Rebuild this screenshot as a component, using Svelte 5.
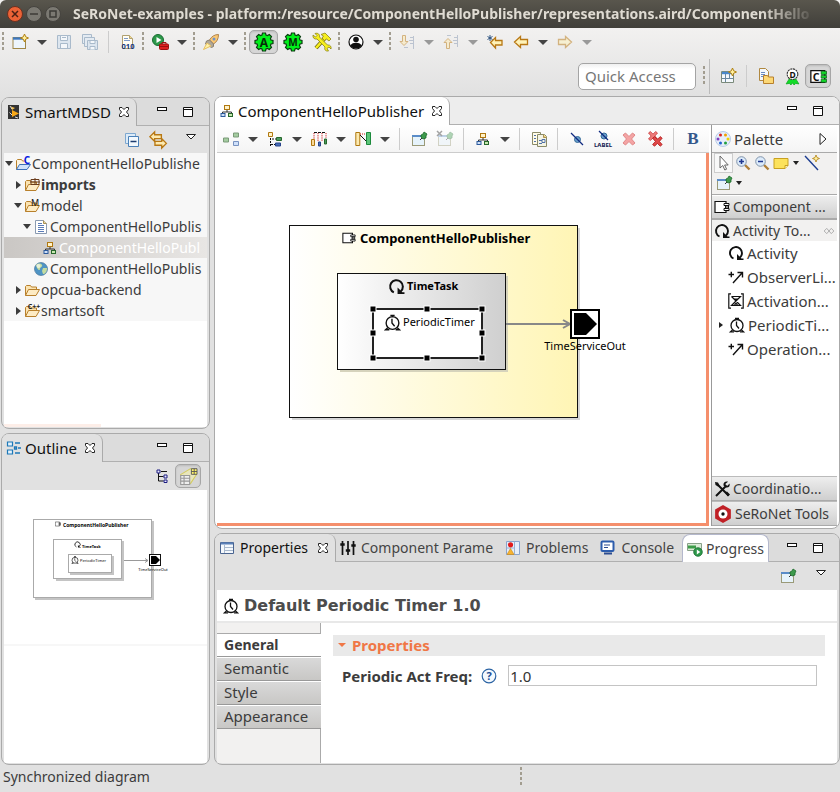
<script>
  const sheet = '<path d="M3.5 1.5h7l3 3v10h-10z" fill="#fffdf4" stroke="#b0a070"/><path d="M10.500 1.500v3h3" fill="#f0d890" stroke="#b0a070"/>';
  const folder = '<path d="M1.500 13.500v-9l1-1h4l1 1.500h5v2" fill="#fbe3b0" stroke="#b8802c"/><path d="M1.500 13.500l3-6h11l-3.500 6z" fill="#fdebc4" stroke="#b8802c"/>';
  const gear = '<path d="M8.500 1h3l.5 2 1.500.6L15.300 2.500l2.200 2.200-1.100 1.800.6 1.500 2 .5v3l-2 .5-.6 1.500 1.100 1.800-2.200 2.200-1.800-1.100-1.500.6-.5 2h-3l-.5-2-1.500-.6-1.800 1.100-2.200-2.200 1.100-1.800L3 12l-2-.5v-3L3 8l.6-1.500L2.500 4.700l2.200-2.200 1.800 1.100L8 3z" fill="#00f01a" stroke="#0a3c10" stroke-width="1.200"/>';
  const tree3 = '<rect x="5.500" y="2.500" width="5" height="4" fill="#fff2c8" stroke="#b07810"/><path d="M8 7v2M3.500 11V9h9v2" fill="none" stroke="#333"/><rect x="2" y="10.500" width="4" height="3" fill="#cfe0f8" stroke="#2c5a9c"/><rect x="9.500" y="10.500" width="4" height="3" fill="#c8e8b0" stroke="#28682c"/>';
  const pin = '<path d="M9 9l3-3" stroke="#333"/><path d="M10 4l2-1 1-2 3 2-1 2 0 2-3 1-2-2z" fill="#3d9a4c" stroke="#1c6a2a" stroke-width=".8"/>';
  const pinwin = '<rect x="1.500" y="4.500" width="12" height="10" fill="#e6f3fb" stroke="#9a9a78"/><path d="M1 5h12" stroke="#5a8cc8" stroke-width="1.800"/>' + pin;
  const arrowL = '<path d="M1.500 8l6-5.500v3h7v5h-7v3z" fill="#fff3b8" stroke="#b87814" stroke-width="1.300"/>';
  const cycle = '<path d="M5.500 13.500A6 6 0 1 1 12 12.500" fill="none" stroke="#111" stroke-width="1.900"/><path d="M9 9v6h6.500v-1.500h-2z" fill="#111"/>';
  const clock = '<circle cx="8" cy="8.500" r="6" fill="#fff" stroke="#111" stroke-width="1.300"/><path d="M7.500 4.500v4l2.500 3M6 1.300h4M8 1v2M3.500 13l-2 1.800h3.500M12.500 13l2 1.800H11" fill="none" stroke="#111" stroke-width="1.300"/>';
  const comp = '<path d="M1 2.500h11v11H1z" fill="#fff" stroke="#111" stroke-width="1.200"/><path d="M10 4.500h5v2h-5zM10 9.500h5v2h-5zM11.500 7h3v2h-3z" fill="#fff" stroke="#111"/>';
  const obs = '<path d="M5 14L14 4M9.500 3.500h5v5" fill="none" stroke="#111" stroke-width="1.400"/><path d="M.5 5.500h5.500M3.300 2.800v5.500" stroke="#111" stroke-width="1.400"/>';
  const zoomGlass = '<path d="M10 10l4.500 4.500" stroke="#b08038" stroke-width="2.400"/><circle cx="6.500" cy="6.500" r="4.800" fill="#dcebfa" stroke="#8294aa"/>';
  const redX = '<path d="M2 4l2.500-2L8 5.500 11.500 2 14 4 10.500 8l3.500 4-2.500 2L8 10.500 4.500 14 2 12 5.500 8z" ';
  const tilted = '<circle cx="8.500" cy="8.500" r="3" fill="#6aa0cc" stroke="#356a98"/><path d="M2 2l12 12" stroke="#102a80" stroke-width="1.200"/>';

  const icons = {
    new: '<rect x="1" y="3.500" width="12.500" height="11" fill="#edf5fc" stroke="#a08848"/><path d="M1 4.500h12" stroke="#3d78c0" stroke-width="2.400"/><path d="M12.500 0l1.200 2.800L16.500 4l-2.800 1.200L12.500 8l-1.200-2.800L8.500 4l2.800-1.200z" fill="#fff0a0" stroke="#b08010"/>',
    save: '<path d="M1.500 1.500h13v13h-13z" fill="#dde6ef" stroke="#a9bacb"/><path d="M4.500 1.500h7v5h-7zM4.500 14v-4.500h7V14M6 3.500h4" fill="#f4f7fa" stroke="#a9bacb"/>',
    saveall: '<path d="M.5.500h9v9h-9z" fill="#e4ebf2" stroke="#a9bacb"/><path d="M2.500 3.500h10v9h-10z" fill="#e4ebf2" stroke="#a9bacb"/><path d="M5.500 6.500h10v9h-10z" fill="#dde6ef" stroke="#a9bacb"/><path d="M8 6.500h5v3H8zM8 15.500v-3h5v3" fill="#f4f7fa" stroke="#a9bacb"/>',
    binary: sheet + '<path d="M5 4.500h4M5 6.500h6" stroke="#7c98c8"/><text x="9" y="14.500" font-size="7.500" font-weight="700" text-anchor="middle" fill="#16377c">010</text>',
    run: '<circle cx="6" cy="6" r="5.500" fill="#2d984a" stroke="#1a6e32"/><path d="M4.500 3l5 3-5 3z" fill="#fff"/><rect x="7.500" y="10" width="9" height="5.500" rx="1" fill="#dc2020" stroke="#9c1010"/><path d="M10 10V8.500h4V10M7.500 12.500h9" fill="none" stroke="#9c1010"/>',
    rocket: '<path d="M15.500.5c-4 0-7 2-9 5.500l4 4c3.500-2 5-5.500 5-9.500z" fill="#fbc873" stroke="#b08450"/><circle cx="11" cy="5" r="1.500" fill="#6f93c8"/><path d="M6.500 6l-3 1-1 3 6 3.500 2-1V10z" fill="#b0a898" stroke="#8a8070"/><path d="M4 9l-3.500 6.500L8 12z" fill="#fff2a8" stroke="#e8c060"/>',
    gearA: gear + '<text x="10" y="14.500" font-size="12" font-weight="700" text-anchor="middle" fill="#052c08">A</text>',
    gearM: gear + '<text x="10" y="13.500" font-size="10" font-weight="700" text-anchor="middle" fill="#052c08">M</text>',
    tools: '<path d="M4 16L13 6" stroke="#6a6208" stroke-width="4"/><path d="M4 16L13 6" stroke="#f6ee1e" stroke-width="2.600"/><path d="M9 2.500l4-1.500 6 6-2 2-2.500-2-2 1.500-2.500-2.500 1.500-2z" fill="#f6ee1e" stroke="#8c8418" stroke-width=".8"/><path d="M1 3l2.500 2L5 3.500 3 1.500c3-1 5 1 4.500 3.500l8 8c3-.5 4 2 3.500 4l-2-2-2 1.500 1.500 2.500c-3 .5-4.500-1.500-3.500-4l-8-8C2.500 7.500.5 6 1 3z" fill="#f6ee1e" stroke="#8c8418" stroke-width=".8"/>',
    user: '<circle cx="8" cy="8" r="7" fill="#fff" stroke="#111" stroke-width="1.200"/><circle cx="8" cy="5.500" r="2.800" fill="#111"/><path d="M2.500 12c.5-2.500 2.500-3.300 5.500-3.300s5 .8 5.500 3.300c-1.500 1.800-3.500 2.500-5.500 2.500S4 13.800 2.500 12z" fill="#111"/>',
    down: '<g opacity=".5"><path d="M3.500 1.500h3v6h2.500L5 11.500 1 7.500h2.500z" fill="#fdeab0" stroke="#b87814"/><path d="M11 3.500h3M10 6.500h4M11 9.500h3M14.500 2v13M5 13.500h4" stroke="#8a9ab4"/></g>',
    up: '<g opacity=".5"><path d="M3.500 14.500h3v-6h2.500L5 4.500 1 8.500h2.500z" fill="#fdeab0" stroke="#b87814"/><path d="M11 3.500h3M10 6.500h4M11 9.500h3M14.500 1v12M4 1.500h4" stroke="#8a9ab4"/></g>',
    last: '<path d="M3.500 8.500l5-5v3h6.500v4.500H8.500v3z" fill="#fff3b8" stroke="#b87814" stroke-width="1.300"/><path d="M3 1v6M.5 2.500l5 3M5.500 2.500l-5 3" stroke="#2c5280"/>',
    back: arrowL,
    forward: '<g transform="translate(16 0) scale(-1 1)" opacity=".5">' + arrowL + '</g>',
    openpersp: '<path d="M1.500 3.500h12v11h-12z" fill="#f4f8fc" stroke="#7a8a7a"/><path d="M2 5h11" stroke="#4a88cc" stroke-width="2.400"/><path d="M5.500 6v8M2 10.500h11M9.500 6v4" stroke="#6a88a0"/><path d="M12.500 0l1.200 2.800L16.500 4l-2.800 1.200L12.500 8l-1.200-2.800L8.500 4l2.800-1.200z" fill="#fff0a0" stroke="#b08010"/>',
    resource: '<path d="M1.500.5h6l3 3v9h-9z" fill="#f4f8fc" stroke="#b08840"/><path d="M3 4.500h4M3 6.500h4M3 8.500h3" stroke="#6a8ac0"/><path d="M5.500 15.500v-8h4l1 1.500h5v6.500z" fill="#fcd876" stroke="#b8802c"/>',
    medal: '<path d="M2 15l3-5h6l3 5-3-.5-1.500 1.500-1.500-2-1.500 2L5 14.500z" fill="#12dc28" stroke="#10a420" stroke-width=".7"/><circle cx="8" cy="5.800" r="5" fill="#fff" stroke="#333" stroke-dasharray="2 .6"/><text x="8" y="9" font-size="8" font-weight="700" text-anchor="middle" fill="#111">D</text>',
    cpersp: '<path d="M.8 2.500h13v11H.8z" fill="#fff" stroke="#111" stroke-width="1.200"/><path d="M10.500 3h5v3h-5zM10.500 7h5v2.500h-5zM10.500 10.500h5v3h-5z" fill="#12d828" stroke="#0a5c14" stroke-width=".7"/><text x="5.800" y="11.800" font-size="10" font-weight="700" text-anchor="middle" fill="#111">C</text>',
    mdsd: '<path d="M2 1h11v14H2z" fill="#333"/><path d="M6 6l7 3.500L6 13z" fill="#f8a818"/><path d="M5 2.500l4 1.500-3 2z" fill="#f8c048"/><path d="M4 2l2 3M3.500 8.500L6 11M9 13l3 1" stroke="#ddd"/>',
    collapse: '<path d="M1.500 1.500h10v10h-10z" fill="#dcebf8" stroke="#7ea8d0"/><path d="M4.500 4.500h10v10h-10z" fill="#f2f8fd" stroke="#4a80b8"/><path d="M6.500 9.500h6" stroke="#1c3c70" stroke-width="1.400"/>',
    link: '<path d="M.8 5L5 .8v2.500h6v3.500H5v2.400z" fill="#fdeab0" stroke="#b87814" stroke-width="1.200"/><path d="M15.500 11l-4.200 4.200v-2.500h-6V9.200h6V6.800z" fill="#fdeab0" stroke="#b87814" stroke-width="1.200"/>',
    project: '<path d="M1.500 13.500v-9l1-1h4l1 1.500h3v2" fill="#fdf4e0" stroke="#b8802c"/><path d="M1.500 13.500l3-5h11l-3.500 5z" fill="#cfe2fa" stroke="#3c70b8"/><text x="12" y="8" font-size="10" font-weight="700" text-anchor="middle" fill="#0818e0">C</text>',
    imports: folder + '<path d="M7 2.500h8v5H7zM11 1v7M6 5h10" fill="none" stroke="#6a3c1c"/>',
    model: folder + '<text x="11" y="8" font-size="9" text-anchor="middle" fill="#111">M</text>',
    folder,
    cpp: folder + '<text x="10" y="6" font-size="7" font-weight="700" text-anchor="middle" fill="#222">C++</text>',
    doc: '<path d="M2.500 1.500h8l3 3v10h-11z" fill="#fff" stroke="#8a9ab0"/><path d="M10.500 1.500v3h3" fill="#f0d890" stroke="#a89058"/><path d="M5 4.500h4M5 6.500h6M5 8.500h6M5 10.500h6M5 12.500h6" stroke="#5a7cb8"/>',
    diagram: tree3,
    globe: '<circle cx="8" cy="8" r="6.500" fill="#4f94c4" stroke="#3a6a90" stroke-width=".6"/><path d="M3 4c2-2 5-2 6 0s-2 2-2 4-2 1-3-1zM10 7l4 0c0 4-2 6-4 6l-1-3z" fill="#c4dca0"/><circle cx="5.500" cy="5" r="2" fill="#fff" opacity=".6"/>',
    outline: '<path d="M1.500 2h5v4h-5zM1.500 10h5v4h-5z" fill="#e4f2fc" stroke="#1c78b8" stroke-width="1.200"/><path d="M9 3h5M12 8h3M9 13h5M8.500 7h2v2h-2z" fill="none" stroke="#1c78b8" stroke-width="1.300"/>',
    hier: '<path d="M4.500 5v8h5M4.500 8.500h5M7 3.500h6" fill="none" stroke="#111"/><path d="M3 2h3v3H3zM10 7h3v3h-3zM10 12h3v2.500h-3z" fill="#e8e8ff" stroke="#1c1c80"/>',
    overview: '<path d="M1 7l10-6 5 5-6 9z" fill="#e8e6bc"/><path d="M1 7L11 1M10 15l6-9" stroke="#d4cc60"/><path d="M1.500 7.500h8v8h-8zM1.500 10h8M1.500 12.500h8M4.500 7.500v8" fill="#eee" stroke="#999"/><path d="M11 1.500h5v5h-5zM11 4h5M13.500 1.500v5" fill="#fff46a" stroke="#555" stroke-width=".8"/>',
    arrange: '<path d="M.5 7h5v4h-5z" fill="#a4cca0" stroke="#7a9a78"/><path d="M10.500 2h5v4h-5z" fill="#a4cca0" stroke="#7a9a78"/><path d="M10.500 10.500h5v4h-5z" fill="#cfe0fa" stroke="#7892c0"/>',
    align: '<path d="M1.500 1.500h4v4h-4z" fill="#fff2c8" stroke="#b07810"/><path d="M9.500 6.500h5v3h-5z" fill="#4a9a60" stroke="#28682c"/><path d="M8.500 12h5v3h-5z" fill="#4a70b8" stroke="#28448c"/><path d="M3.500 7v8M5 8h4M4 13.500h4" stroke="#111" stroke-dasharray="2 1"/>',
    distribute: '<path d="M.5 8.500h3v6h-3z" fill="#f8d898" stroke="#b07810"/><path d="M7.500 11h2v4h-2z" fill="#4a70b8" stroke="#28448c"/><path d="M13.500 8h2v5h-2z" fill="#4a9a60" stroke="#28682c"/><path d="M3 2v6M7 2v8M11 2v8M15 2v5" stroke="#d01818" stroke-dasharray="1.200 1"/><path d="M3 1.500h12" stroke="#111" stroke-width="1.200" stroke-dasharray="3 1"/>',
    size: '<path d="M.8 1.500h4v13h-4z" fill="#fdeab0" stroke="#b07810"/><path d="M11.500 1.500h4v12h-4z" fill="#5cc478" stroke="#1c8a3c"/><path d="M5 3h6" stroke="#d01818" stroke-dasharray="1 1"/><path d="M5 4l6 6" stroke="#111"/>',
    pinwin,
    unpin: '<g opacity=".4">' + pinwin + '<path d="M0 0l5 5M5 0L0 5" stroke="#222" stroke-width="1.500"/></g>',
    copyfmt: '<path d="M1.500 1.500h8v12h-8z" fill="#fffbe8" stroke="#8a8a68"/><path d="M6.500 3.500h7l2 2v10h-9z" fill="#f4f4e4" stroke="#8a8a68"/><path d="M12.500 3.500v3h3" fill="#f0d060" stroke="#a89058"/><path d="M3 4.500h2M3 7.500h2M3 10.500h2M8 9.500h3M8 12.500h3M11 8.500h3v3h-3z" fill="none" stroke="#5070a8"/>',
    hide: tilted,
    hidelabel: '<circle cx="9" cy="5" r="3" fill="#6aa0cc" stroke="#356a98"/><path d="M4 0l9 9" stroke="#102a80" stroke-width="1.200"/><text x="8" y="16" font-size="6" font-weight="700" text-anchor="middle" fill="#101850">LABEL</text>',
    del: redX + 'fill="#f4a4a4" stroke="#e08888"/>',
    delall: redX + 'fill="#ee7c7c" stroke="#c43030" transform="translate(0 -1) scale(.75)"/>' + redX + 'fill="#e04848" stroke="#b01818" transform="translate(4 4) scale(.8)"/>',
    palette: '<circle cx="8" cy="8" r="7.500" fill="#e6eefa" stroke="#b8cce8"/><circle cx="5.500" cy="4" r="1.500" fill="#d82020"/><circle cx="10.500" cy="4" r="1.500" fill="#f0a000"/><circle cx="13" cy="8" r="1.500" fill="#f0d000"/><circle cx="3" cy="8" r="1.500" fill="#8040c0"/><circle cx="5.500" cy="12" r="1.500" fill="#2060d0"/><circle cx="10.500" cy="12" r="1.500" fill="#20a040"/>',
    select: '<path d="M4 1v12l2.800-2.500 2 4.500 1.800-.8-2-4.200h3.600z" fill="#fff" stroke="#666"/>',
    zoomin: zoomGlass + '<path d="M4 6.500h5M6.500 4v5" stroke="#203890" stroke-width="1.600"/>',
    zoomout: zoomGlass + '<path d="M4 6.500h5" stroke="#203890" stroke-width="1.600"/>',
    note: '<path d="M1 3.500h14v7l-3 3H1z" fill="#fce25c" stroke="#c8a020"/><path d="M12 13.500v-3h3" fill="#fff6b8" stroke="#c8a020"/>',
    wire: '<path d="M1 1l13 14" stroke="#1c3c90" stroke-width="1.400"/><path d="M12 0l1 2.500L15.500 3.500 13 4.500 12 7l-1-2.500L8.500 3.500 11 2.500z" fill="#fff0a0" stroke="#b08010" stroke-width=".8"/>',
    comp, cycle, obs, clock,
    activation: '<path d="M3 .8H.8v14.400H3M13 .8h2.200v14.400H13M3.500 3.500h9L3.500 12.500h9L3.500 3.500" fill="none" stroke="#111" stroke-width="1.200"/><path d="M6 5.500h4L8 8zM5.500 11.800h5L8 9.500z" fill="#111"/>',
    coord: '<path d="M2 15L12.500 4.500M3.500 3.500L14.500 14.500" stroke="#111" stroke-width="2"/><path d="M1 1l3 .5 1.500 3-1.500 1L1.500 4zM14 .8l-2.500 2 .3 1.700 1.700.3 2-2.300c.8 2.500-.8 4.500-3.500 4L9.500 4.500c-.5-2.700 2-4.500 4.500-3.700zM11 11.500l2-1 3 3-2 2z" fill="#111"/>',
    seronet: '<path d="M8 0l7 4v8l-7 4-7-4V4z" fill="#c02026"/><circle cx="8" cy="8" r="4" fill="#fff"/><circle cx="8" cy="8" r="1.500" fill="#111"/>',
    props: '<path d="M1.500 2.500h13v11h-13z" fill="#f4f8fc" stroke="#4a6490"/><path d="M2 3.500h12" stroke="#5a80b8" stroke-width="2"/><path d="M5.500 5v8M6 7.500h8M6 10.500h8" stroke="#a8b8cc"/>',
    params: '<path d="M2.500 1v14M8 1v14M13.500 1v14" stroke="#111" stroke-width="1.700"/><path d="M.3 4.500h4.400M5.800 10.500h4.400M11.300 5.500h4.400" stroke="#111" stroke-width="2.400"/>',
    problems: '<path d="M1.500 1.500h13v13h-13z" fill="#e4eefa" stroke="#8aa4cc"/><path d="M1.500 8h8M9.500 1.500v13" stroke="#9ab0d0"/><circle cx="5.500" cy="4.800" r="2.600" fill="#e01c1c"/><path d="M5.500 8.500l3.500 6H2z" fill="#f8b430" stroke="#c88410" stroke-width=".6"/>',
    console: '<rect x="1.500" y="1.500" width="12" height="9.500" rx="1" fill="#fff" stroke="#2c5cac" stroke-width="2"/><path d="M4 5h6M4 7.500h4" stroke="#2c4c90"/><path d="M4 13.500h8" stroke="#2c4c90" stroke-width="2"/>',
    progress: '<path d="M.5 2.500h14v7H.5z" fill="#dcecd8" stroke="#88a088"/><path d="M1 4.500h8v3H1z" fill="#3c9c48"/><circle cx="11" cy="11" r="4.300" fill="#2d984a" stroke="#1a6e32" stroke-width=".8"/><path d="M9.800 8.500l3.500 2.500-3.500 2.500z" fill="#fff"/>',
    help: '<circle cx="8" cy="8" r="6.800" fill="#f4f9fe" stroke="#2c64a4" stroke-width="1.200"/><text x="8" y="12" font-size="11" font-weight="700" text-anchor="middle" fill="#1c4c94">?</text>',
    close: '<path d="M3.500 3.500h2.500l2 2 2-2h2.500v2l-2 2.500 2 2.500v2H10l-2-2-2 2H3.500v-2l2-2.500-2-2.500z" fill="#fff" stroke="#222"/>',
    min: '<rect x="3.500" y="3.500" width="9" height="3" fill="#fff" stroke="#111"/>',
    max: '<path d="M3.500 3.500h9v9h-9zM3.500 5.500h9" fill="#fff" stroke="#111" />',
    viewmenu: '<path d="M3.500 5.500h9L8 10z" fill="#fff" stroke="#222"/>',
    pin3: '<path d="M5 2.500v11L11 8z" fill="#fff" stroke="#222"/>',
    pinned: '<path d="M5 4.500L1.500 8 5 11.500M11 4.500L14.500 8 11 11.500M5 4.500l6 7M11 4.500l-6 7" fill="none" stroke="#999"/>'
  };

  const mainTools = ['|', 'new', 'v', 'save', 'saveall', '/', 'binary', '|', 'run', 'v', '|', 'rocket', 'v', '|', 'gearA', 'gearM', 'tools', '|', 'user', 'v', '|', 'down', 'x', 'up', 'x', 'last', 'back', 'v', 'forward', 'x'];
  const editorTools = ['arrange', 'v', 'align', 'v', 'distribute', 'v', 'size', 'v', '/', 'pinwin', 'unpin', '/', 'diagram', 'v', '/', 'copyfmt', '/', 'hide', 'hidelabel', 'del', 'delall', '/', 'B'];
  const large = ['gearA', 'gearM', 'tools'];

  const tree = [
    { level: 0, state: 'open', icon: 'project', text: 'ComponentHelloPublishe' },
    { level: 1, state: 'closed', icon: 'imports', text: 'imports', bold: true },
    { level: 1, state: 'open', icon: 'model', text: 'model' },
    { level: 2, state: 'open', icon: 'doc', text: 'ComponentHelloPublis' },
    { level: 3, state: '', icon: 'diagram', text: 'ComponentHelloPubl', selected: true },
    { level: 2, state: '', icon: 'globe', text: 'ComponentHelloPublis' },
    { level: 1, state: 'closed', icon: 'folder', text: 'opcua-backend' },
    { level: 1, state: 'closed', icon: 'cpp', text: 'smartsoft' }
  ];

  const paletteItems = [
    ['cycle', 'Activity'],
    ['obs', 'ObserverLi...'],
    ['activation', 'Activation...'],
    ['clock', 'PeriodicTi...'],
    ['obs', 'Operation...']
  ];
  const views = [
    ['params', 'Component Parame'],
    ['problems', 'Problems'],
    ['console', 'Console']
  ];
  const pages = ['General', 'Semantic', 'Style', 'Appearance'];
  const handles = [[156, 156], [210, 156], [265, 156], [156, 180], [265, 180], [156, 205], [210, 205], [265, 205]];
  let page = $state('General');
  let frequency = $state('1.0');
</script>

{#snippet icon(name, size = 16, box = 16)}
  <svg class="icon" width={size} height={size} viewBox="0 0 {box} {box}" aria-hidden="true">{@html icons[name]}</svg>
{/snippet}

{#snippet tools(list)}
  {#each list as t}
    {#if t === '|'}
      <span class="grip"></span>
    {:else if t === '/'}
      <span class="rule"></span>
    {:else if t === 'v' || t === 'x'}
      <button class="drop" disabled={t === 'x'} aria-label="More"><i></i></button>
    {:else if t === 'B'}
      <button class="tool bold-tool">B</button>
    {:else if large.includes(t)}
      <button class="tool wide" class:pressed={t === 'gearA'} aria-label={t}>{@render icon(t, 20, 20)}</button>
    {:else}
      <button class="tool" aria-label={t}>{@render icon(t)}</button>
    {/if}
  {/each}
{/snippet}

{#snippet windowButtons()}
  <span class="winbtns">
    <button aria-label="Minimize">{@render icon('min')}</button>
    <button aria-label="Maximize">{@render icon('max')}</button>
  </span>
{/snippet}

<div class="window">
  <header class="titlebar">
    <button class="wb close" aria-label="Close window"><svg width="8" height="8"><path d="M1 1l6 6M7 1l-6 6" stroke="#4c2014" stroke-width="1.500" /></svg></button>
    <button class="wb" aria-label="Minimize window"><svg width="8" height="8"><path d="M0 4h8" stroke="#3c3b37" stroke-width="1.500" /></svg></button>
    <button class="wb" aria-label="Maximize window"><svg width="8" height="8"><path d="M1 1h6v6h-6z" fill="none" stroke="#3c3b37" stroke-width="1.500" /></svg></button>
    <h1>SeRoNet-examples - platform:/resource/ComponentHelloPublisher/representations.aird/ComponentHello</h1>
  </header>

  <div class="toolbar">{@render tools(mainTools)}</div>
  <div class="perspectives">
    <input class="quick" type="text" placeholder="Quick Access" aria-label="Quick Access" />
    <span class="grip"></span>
    <div class="switcher">
      <button class="tool" aria-label="Open perspective">{@render icon('openpersp')}</button>
      <span class="rule"></span>
      <button class="tool" aria-label="Resource">{@render icon('resource')}</button>
      <button class="tool" aria-label="Deployment">{@render icon('medal', 17)}</button>
      <button class="tool pressed" aria-label="Component">{@render icon('cpersp', 17)}</button>
    </div>
  </div>

  <main>
    <div class="side">
      <section class="panel">
        <div class="tabs">
          <span class="tab active">{@render icon('mdsd')}<b>SmartMDSD</b><button aria-label="Close">{@render icon('close')}</button></span>
          {@render windowButtons()}
        </div>
        <div class="viewbar treebar">
          <button class="tool" aria-label="Collapse all">{@render icon('collapse')}</button>
          <button class="tool" aria-label="Link with editor">{@render icon('link', 18)}</button>
          <button class="menu" aria-label="View menu">{@render icon('viewmenu')}</button>
        </div>
        <div class="body">
          <ul class="tree">
            {#each tree as row}
              <li class="level{row.level}" class:selected={row.selected} class:bold={row.bold}>
                <span class="twist {row.state}"></span>
                {@render icon(row.icon)}
                <span>{row.text}</span>
              </li>
            {/each}
          </ul>
          <div class="progressline"></div>
        </div>
      </section>

      <section class="panel">
        <div class="tabs">
          <span class="tab active">{@render icon('outline')}<b>Outline</b><button aria-label="Close">{@render icon('close')}</button></span>
          {@render windowButtons()}
        </div>
        <div class="viewbar outlinebar">
          <button class="tool" aria-label="Tree">{@render icon('hier')}</button>
          <button class="tool pressed" aria-label="Overview">{@render icon('overview', 18)}</button>
        </div>
        <div class="body">
          <div class="thumb">
            <svg width="100%" height="154">
              <path d="M31 109h118V31" fill="none" stroke="#c4c4c4" stroke-width="2" />
              <rect x="29.500" y="29.500" width="118" height="78" fill="#fff" stroke="#aaa" />
              <path d="M52 90h67V51" fill="none" stroke="#c4c4c4" stroke-width="2" />
              <rect x="49.500" y="49.500" width="68" height="39" fill="#fff" stroke="#aaa" />
              <path d="M66 84h43V66" fill="none" stroke="#c4c4c4" stroke-width="2" />
              <rect x="64.500" y="64.500" width="43" height="18" fill="#fff" stroke="#aaa" />
              <path d="M120 70.500h24l-3-2m3 2l-3 2" fill="none" stroke="#999" />
              <rect x="145.500" y="64.500" width="11" height="11" fill="#fff" stroke="#111" />
              <path d="M147 66h5l4 4-4 4h-5z" />
              <g font-size="5" font-weight="700">
                <text x="59" y="37">ComponentHelloPublisher</text>
                <text x="78" y="58" font-size="4">TimeTask</text>
              </g>
              <text x="76" y="72" font-size="4">PeriodicTimer</text>
              <text x="149" y="81" font-size="4" text-anchor="middle">TimeServiceOut</text>
              <svg x="51" y="31" width="6" height="6" viewBox="0 0 16 16">{@html icons.comp}</svg>
              <svg x="70" y="51" width="7" height="7" viewBox="0 0 16 16">{@html icons.cycle}</svg>
              <svg x="67" y="66" width="8" height="8" viewBox="0 0 16 16">{@html icons.clock}</svg>
            </svg>
          </div>
        </div>
      </section>
    </div>

    <div class="centre">
      <section class="panel editor">
        <div class="tabs">
          <span class="tab active">{@render icon('diagram')}<b>ComponentHelloPublisher</b><button aria-label="Close">{@render icon('close')}</button></span>
          {@render windowButtons()}
        </div>
        <div class="body split">
          <div class="drawing">
            <div class="editorbar">{@render tools(editorTools)}</div>
            <svg class="canvas">
              <defs>
                <linearGradient id="cream"><stop offset="0" stop-color="#fff" /><stop offset="1" stop-color="#fff5b5" /></linearGradient>
                <linearGradient id="grey"><stop offset="0" stop-color="#fff" /><stop offset="1" stop-color="#cfcfcf" /></linearGradient>
              </defs>
              <rect x="75" y="75" width="288" height="192" fill="#d6d6d6" />
              <rect x="72.500" y="72.500" width="288" height="192" fill="url(#cream)" stroke="#111" />
              <rect x="123" y="123" width="168" height="96" fill="#d6d3bc" />
              <rect x="120.500" y="120.500" width="168" height="96" fill="url(#grey)" stroke="#111" />
              <rect x="156" y="156" width="109" height="49" fill="#fff" stroke="#222" stroke-width="2" />
              <path d="M289 171h63M346 167l7 4-7 4" fill="none" stroke="#888" stroke-width="2" />
              <rect x="354" y="157" width="28" height="28" fill="#fff" stroke="#000" stroke-width="2" />
              <path d="M357 160h12l11 11-11 11h-12z" />
              {#each handles as [x, y]}
                <rect x={x - 3} y={y - 3} width="6" height="6" fill="#000" stroke="#fff" />
              {/each}
              <svg x="124" y="78" width="16" height="14" viewBox="0 0 16 16">{@html icons.comp}</svg>
              <svg x="171" y="125" width="17" height="17" viewBox="0 0 16 16">{@html icons.cycle}</svg>
              <svg x="167" y="161" width="17" height="17" viewBox="0 0 16 16">{@html icons.clock}</svg>
              <text x="143" y="90" font-size="13" font-weight="700">ComponentHelloPublisher</text>
              <text x="190" y="137" font-size="11" font-weight="700">TimeTask</text>
              <text x="186" y="173" font-size="11">PeriodicTimer</text>
              <text x="368" y="197" font-size="11" text-anchor="middle">TimeServiceOut</text>
            </svg>
          </div>
          <aside class="palette">
            <div class="phead">{@render icon('palette')}<span>Palette</span><button aria-label="Collapse palette">{@render icon('pin3')}</button></div>
            <div class="ptools">
              <button class="chosen" aria-label="Select">{@render icon('select')}</button>
              <button aria-label="Zoom in">{@render icon('zoomin')}</button>
              <button aria-label="Zoom out">{@render icon('zoomout')}</button>
              <button aria-label="Note">{@render icon('note')}</button>
              <i class="tiny"></i>
              <button class="wirebtn" aria-label="Link">{@render icon('wire')}</button>
              <button aria-label="Pin">{@render icon('pinwin')}</button>
              <i class="tiny"></i>
            </div>
            <button class="drawer">{@render icon('comp')}<span>Component ...</span></button>
            <button class="drawer open">{@render icon('cycle')}<span>Activity To...</span>{@render icon('pinned', 12)}</button>
            <ul class="pitems">
              {#each paletteItems as [name, label]}
                <li><span class="ptwist" class:shown={name === 'clock'}></span>{@render icon(name)}<span>{label}</span></li>
              {/each}
            </ul>
            <button class="drawer low">{@render icon('coord')}<span>Coordinatio...</span></button>
            <button class="drawer low">{@render icon('seronet', 18)}<span>SeRoNet Tools</span></button>
          </aside>
        </div>
      </section>

      <section class="panel">
        <div class="tabs views">
          <span class="tab active">{@render icon('props')}<b>Properties</b><button aria-label="Close">{@render icon('close')}</button></span>
          {#each views as [name, label]}
            <button class="tab">{@render icon(name)}<b>{label}</b></button>
          {/each}
          <button class="tab raised">{@render icon('progress')}<b>Progress</b></button>
          {@render windowButtons()}
        </div>
        <div class="viewbar">
          <button class="tool" aria-label="Pin view">{@render icon('pinwin')}</button>
          <button class="menu" aria-label="View menu">{@render icon('viewmenu')}</button>
        </div>
        <div class="body">
          <h2>{@render icon('clock')}Default Periodic Timer 1.0</h2>
          <div class="sheet">
            <nav>
              {#each pages as p}
                <button class:current={page === p} onclick={() => (page = p)}>{p}</button>
              {/each}
            </nav>
            <div class="form">
              <h3><i></i>Properties</h3>
              <div class="field">
                <label for="freq">Periodic Act Freq:</label>
                {@render icon('help')}
                <input id="freq" type="text" bind:value={frequency} />
              </div>
            </div>
          </div>
        </div>
      </section>
    </div>
  </main>

  <footer><span>Synchronized diagram</span><span class="grip"></span></footer>
</div>

<style>
  :global(body) { margin: 0; background: #e1e1e1; }
  .window {
    display: flex; flex-direction: column; height: 100vh; min-height: 640px; overflow: hidden;
    font: 15px/20px "Noto Sans", "Open Sans", sans-serif; color: #3c3c3c;
    background: linear-gradient(#f2f1f0 28px, #e1e1e1 96px);
  }
  .window :global(*) { box-sizing: border-box; }
  button { font: inherit; color: inherit; border: 0; padding: 0; margin: 0; background: none; display: flex; align-items: center; }
  .icon { flex: none; display: block; overflow: visible; }
  ul { list-style: none; margin: 0; padding: 0; }
  h1, h2, h3 { margin: 0; font-size: 15px; }

  .titlebar { height: 28px; flex: none; display: flex; align-items: center; gap: 3px; padding: 0 8px 0 7px; background: linear-gradient(#59564d, #403f3a); border-radius: 6px 6px 0 0; }
  .wb { width: 16px; height: 16px; flex: none; justify-content: center; border-radius: 50%; background: #7b7972; border: 1px solid #45433e; }
  .wb.close { background: #ec6236; border-color: #6a3020; }
  h1 { margin-left: 9px; flex: 1; font-size: 14px; color: #dfdbd2; white-space: nowrap; overflow: hidden; -webkit-mask-image: linear-gradient(90deg, #000 calc(100% - 70px), transparent calc(100% - 16px)); mask-image: linear-gradient(90deg, #000 calc(100% - 70px), transparent calc(100% - 16px)); }

  .toolbar, .editorbar { display: flex; align-items: center; flex: none; }
  .toolbar { height: 28px; }
  .tool { width: 26px; height: 24px; flex: none; justify-content: center; }
  .wide { width: 29px; }
  .pressed { border: 1px solid #a6a6a6; border-radius: 5px; background: #d6d6d6; box-shadow: inset 0 1px 2px #bbb; }
  .drop { width: 18px; height: 24px; flex: none; justify-content: center; }
  .drop i { border: 5px solid transparent; border-top-color: #444; border-bottom: 0; }
  .drop:disabled i { border-top-color: #999; }
  .grip { width: 7px; height: 20px; flex: none; background: repeating-linear-gradient(#a29d90 0 3px, transparent 3px 5px) 2px 0 / 2px 100% no-repeat; }
  .rule { width: 12px; height: 22px; flex: none; background: linear-gradient(#ccc, #ccc) 5px 0 / 1px 100% no-repeat; }
  .toolbar .rule { width: 11px; }
  .bold-tool { font: bold 17px "Liberation Serif", serif; color: #34588c; }

  .perspectives { height: 40px; flex: none; display: flex; align-items: center; justify-content: flex-end; gap: 5px; }
  .quick { width: 118px; height: 27px; border: 1px solid #a4a4a4; border-radius: 5px; padding: 0 6px; font: inherit; color: #444; background: linear-gradient(#f0f0f0, #fff 5px); }
  .quick::placeholder { color: #777; opacity: 1; }
  .perspectives > .grip { margin-right: -4px; }
  .switcher { height: 35px; display: flex; align-items: center; padding: 0 9px 0 5px; border-left: 1px solid #bbb; }

  main { flex: 1; min-height: 0; display: grid; grid-template-columns: 209px minmax(0, 1fr); gap: 4px; padding: 0 0 0 1px; }
  .side, .centre { display: grid; gap: 4px; min-height: 0; }
  .side { grid-template-rows: 1fr 1fr; padding-top: 1px; }
  .centre { grid-template-rows: 433fr 232fr; }
  .panel { min-width: 0; min-height: 0; display: flex; flex-direction: column; border: 1px solid #aaa; border-radius: 8px; background: #e1e1e1; overflow: hidden; padding-bottom: 1px; }
  .tabs { height: 28px; flex: none; display: flex; align-items: stretch; background: linear-gradient(#b0b0b0, #b0b0b0) 0 100% / 100% 1px no-repeat #dcdcdc; }
  .tab { display: flex; align-items: center; gap: 5px; padding: 0 8px 0 4px; white-space: nowrap; color: #444; min-width: 0; flex: none; }
  .tab b { font-weight: 400; }
  .tab.active { gap: 3px; padding: 0 4px; background: #e1e1e1; color: #111; border-right: 1px solid #aaa; border-radius: 0 8px 0 0; }
  .tab.active button { margin-left: 2px; }
  .views .tab.active { gap: 5px; }
  .tab.raised { background: #fff; padding: 0 4px; gap: 3px; border: 1px solid #b4b8cc; border-width: 1px 1px 0; border-radius: 8px 8px 0 0; }
  .views { font-size: 14px; }
  .winbtns { margin-left: auto; display: flex; gap: 10px; padding-right: 13px; align-items: center; }
  .viewbar { height: 28px; flex: none; display: flex; align-items: center; justify-content: flex-end; padding-right: 10px; }
  .treebar { height: 27px; }
  .viewbar .menu { margin-left: 12px; align-self: flex-start; padding-top: 3px; }
  .outlinebar { padding-right: 8px; }
  .body { flex: 1; min-height: 0; margin: 0 2px; background: #fff; display: flex; flex-direction: column; overflow: hidden; }
  .editor { background: #fff; }
  .editor .tabs { background-color: #ededed; }
  .editor .tab.active { background: #fff; }

  .tree { background: #f7f7f7; overflow: hidden; font-size: 14px; line-height: 20px; }
  .tree li { display: flex; align-items: center; height: 21px; gap: 1px; white-space: nowrap; }
  .tree span { flex: none; }
  .level1 { padding-left: 9px; }
  .level2 { padding-left: 18px; }
  .level3 { padding-left: 27px; }
  .tree .selected { background: linear-gradient(90deg, #cac7c4, #e8e6e4); color: #fff; }
  .tree .bold { font-weight: 700; }
  .twist { width: 10px; display: flex; justify-content: center; }
  .twist.open::before { content: ""; border: 4px solid transparent; border-top: 5px solid #3c3c3c; border-bottom: 0; }
  .twist.closed::before { content: ""; border: 4px solid transparent; border-left: 5px solid #3c3c3c; border-right: 0; }
  .progressline { margin-top: auto; width: 48%; height: 3px; background: #fdeee8; }
  .thumb { box-shadow: 0 2px #f7f7f7; }
  .thumb svg { display: block; }

  .split { flex-direction: row; margin-bottom: 1px; }
  .drawing { flex: 1; min-width: 0; display: flex; flex-direction: column; }
  .editorbar { height: 28px; padding: 1px 0 0 1px; background: linear-gradient(#fff, #f4f4f4); border-bottom: 1px solid #ccc; overflow: hidden; }
  .canvas { flex: 1; min-height: 0; width: 100%; border-right: 3px solid #f58f6c; border-bottom: 3px solid #f58f6c; }
  .palette { width: 126px; flex: none; margin-left: 2px; border-left: 1px solid #999; display: flex; flex-direction: column; font-size: 14px; white-space: nowrap; }
  .phead { display: flex; align-items: center; gap: 3px; height: 28px; flex: none; padding: 1px 6px 0 3px; background: linear-gradient(#fff, #f4f4f4); border-bottom: 1px solid #aaa; font-size: 15px; }
  .phead button { margin-left: auto; }
  .ptools { display: flex; flex-wrap: wrap; align-content: flex-start; height: 42px; flex: none; padding: 0 2px; background: #f2f1f0; border-bottom: 1px solid #aaa; }
  .ptools button { width: 19px; height: 20px; justify-content: center; }
  .ptools .chosen { border: 1px solid #ccc; background: #f8f8f8; }
  .ptools .wirebtn { margin-right: 10px; }
  .tiny { align-self: center; margin: 0 3px; border: 3px solid transparent; border-top: 4px solid #222; border-bottom: 0; }
  .drawer { height: 24px; flex: none; gap: 3px; padding: 0 2px; background: linear-gradient(#eee, #cfcfcf); border-bottom: 1px solid #aaa; border-top: 1px solid #fff; overflow: hidden; }
  .drawer.low { height: 25px; border-top-color: #bbb; }
  .drawer.open { height: 22px; background: #f2f1f0; border-bottom: 0; border-top-color: #aaa; }
  .drawer.open .icon:last-child { margin-left: auto; }
  .pitems { flex: 1; min-height: 0; overflow: hidden; font-size: 15px; }
  .pitems li { display: flex; align-items: center; height: 24px; gap: 3px; padding-left: 7px; }
  .ptwist { width: 6px; height: 6px; }
  .ptwist.shown { border: 3px solid transparent; border-left: 4px solid #222; }

  h2 { display: flex; align-items: center; gap: 5px; height: 33px; flex: none; padding-left: 6px; font: bold 16px "DejaVu Sans", sans-serif; color: #4c4c4c; border-bottom: 2px solid #e8e8e8; }
  .sheet { display: flex; flex: 1; min-height: 0; }
  nav { width: 104px; flex: none; padding-top: 10px; background: #f2f1f0; border-right: 1px solid #aaa; }
  nav button { width: 104px; height: 24px; padding: 0 0 1px 7px; background: linear-gradient(#dadada, #c8c7c5); border-bottom: 1px solid #999; box-shadow: inset 0 1px #fff; }
  nav .current { background: #fff; font-weight: 700; font-size: 14px; border-top: 1px solid #aaa; }
  .form { flex: 1; min-width: 0; padding: 12px 12px 0; }
  h3 { display: flex; align-items: center; gap: 6px; height: 21px; padding: 0 0 2px 5px; background: #e9e9e9; color: #f07746; }
  h3 i { border: 4px solid transparent; border-top-color: #f07746; border-bottom: 0; }
  .field { display: flex; align-items: center; gap: 9px; margin-top: 9px; padding: 0 8px 0 9px; }
  .field label { font-weight: 700; }
  .field input { flex: 1; min-width: 0; height: 21px; border: 1px solid #c4c4c4; padding: 0 1px; font: inherit; color: #333; background: #fff; margin-left: 2px; }

  footer { height: 27px; flex: none; display: flex; align-items: center; justify-content: space-between; padding: 0 37.5% 3px 3px; font-size: 14px; }
</style>
